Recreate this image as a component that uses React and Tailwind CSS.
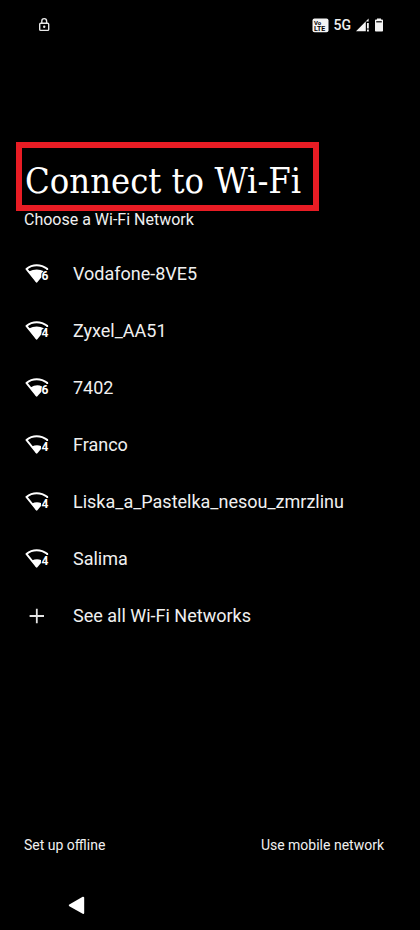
const NETWORKS = [
  { name: 'Vodafone-8VE5', gen: '6', level: 3 },
  { name: 'Zyxel_AA51', gen: '4', level: 3 },
  { name: '7402', gen: '6', level: 2 },
  { name: 'Franco', gen: '4', level: 1 },
  { name: 'Liska_a_Pastelka_nesou_zmrzlinu', gen: '4', level: 1 },
  { name: 'Salima', gen: '4', level: 1 },
]

// Filled part of the fan for each signal level
const FILLS = {
  1: 'M6.8 11.4Q11.7 9.4 16 11V14L11.7 19Z',
  2: 'M5.4 9.4Q11.7 5.8 17 8.4V13L11.7 19Z',
  3: 'M3.8 7.4Q11.7 3.6 19 7.2L16.6 9V13L11.7 19Z',
}

function WifiIcon({ gen, level }) {
  return (
    <svg width="24" height="20" viewBox="0 0 24 20" fill="none" aria-hidden="true">
      <path d="M22.2 6V4.8Q17.4 1.2 11.7 1.2T1.4 4.9L11.7 17.6" stroke="#fff" strokeWidth="1.9" strokeLinejoin="round" />
      <path d={FILLS[level]} fill="#fff" />
      <text
        x="16.6"
        y="16"
        fontSize="12"
        fontWeight="700"
        fill="#fff"
        stroke="#000"
        strokeWidth="1.4"
        paintOrder="stroke"
        className="font-['Roboto',sans-serif]"
      >
        {gen}
      </text>
    </svg>
  )
}

function PlusIcon() {
  return (
    <svg width="24" height="20" viewBox="0 0 24 20" fill="none" aria-hidden="true">
      <path d="M11.8 2.8V17.2M4.6 10H19" stroke="#e4e4e4" strokeWidth="1.8" />
    </svg>
  )
}

function StatusBar() {
  return (
    <header className="flex h-[50px] items-center justify-between pl-9 pr-9">
      <svg width="16" height="16" viewBox="0 0 16 16" fill="none" aria-label="Locked">
        <rect x="3.7" y="6.2" width="9" height="7.2" rx="1" stroke="#e8e8e8" strokeWidth="1.4" />
        <path d="M5.8 6V4a2.4 2.4 0 0 1 4.8 0V6" stroke="#e8e8e8" strokeWidth="1.4" />
        <circle cx="8.2" cy="9.8" r="1.2" fill="#e8e8e8" />
      </svg>
      <div className="flex items-center gap-1">
        <svg width="17" height="15" viewBox="0 0 17 15" aria-label="VoLTE">
          <rect x="0.5" y="0.6" width="16" height="13.6" rx="2" fill="#f4f4f4" />
          <text x="2" y="6.6" fontSize="6" fontWeight="700" className="font-['Roboto',sans-serif]">Vo</text>
          <text x="2" y="13" fontSize="7" fontWeight="700" className="font-['Roboto',sans-serif]">LTE</text>
        </svg>
        <span className="px-px text-sm font-medium">5G</span>
        <svg width="14" height="14" viewBox="0 0 14 14" fill="#f4f4f4" aria-label="Mobile signal">
          <path d="M0 13.2L12.6 0.6V3.6H9.8V13.2Z" />
          <path d="M11 5H12.8V10.4H11ZM11 11.6H12.8V13.4H11Z" />
        </svg>
        <svg width="10" height="14" viewBox="0 0 10 14" aria-label="Battery">
          <path d="M3 0.4H7V1.6H8.2Q9 1.6 9 2.4V12.8Q9 13.6 8.2 13.6H1.8Q1 13.6 1 12.8V2.4Q1 1.6 1.8 1.6H3Z" fill="#f4f4f4" />
          <path d="M2.2 3.2H7.8V4.4H2.2Z" fill="#000" />
        </svg>
      </div>
    </header>
  )
}

export default function App() {
  return (
    <div className="flex min-h-screen flex-col bg-black font-['Roboto',sans-serif] text-[#f0f0f0]">
      <StatusBar />

      <main className="mt-[92px] flex-1">
        <h1 className="mx-4 w-fit border-6 border-[#e81c24] pt-3 pb-1 pl-[3px] pr-3 font-['DejaVu_Serif_Condensed','DejaVu_Serif',serif] text-4xl leading-[41px] text-white">
          Connect to Wi-Fi
        </h1>
        <p className="px-6 text-base leading-[18px]">Choose a Wi-Fi Network</p>

        <ul className="mt-4">
          {NETWORKS.map(n => (
            <li key={n.name}>
              <button type="button" className="flex h-[57px] w-full items-center gap-6 px-[25px] text-left text-lg">
                <WifiIcon gen={n.gen} level={n.level} />
                {n.name}
              </button>
            </li>
          ))}
          <li>
            <button type="button" className="flex h-[57px] w-full items-center gap-6 px-[25px] text-left text-lg">
              <PlusIcon />
              See all Wi-Fi Networks
            </button>
          </li>
        </ul>
      </main>

      <footer className="flex justify-between pl-6 pr-9 text-sm">
        <button type="button">Set up offline</button>
        <button type="button">Use mobile network</button>
      </footer>

      <nav className="mt-[25px] flex h-[50px] items-center px-[67px]">
        <button type="button" aria-label="Back">
          <svg width="20" height="20" viewBox="0 0 20 20" fill="#fff" stroke="#fff" strokeWidth="2" strokeLinejoin="round">
            <path d="M2.8 10.3L16.2 2.7V17.9Z" />
          </svg>
        </button>
      </nav>
    </div>
  )
}
